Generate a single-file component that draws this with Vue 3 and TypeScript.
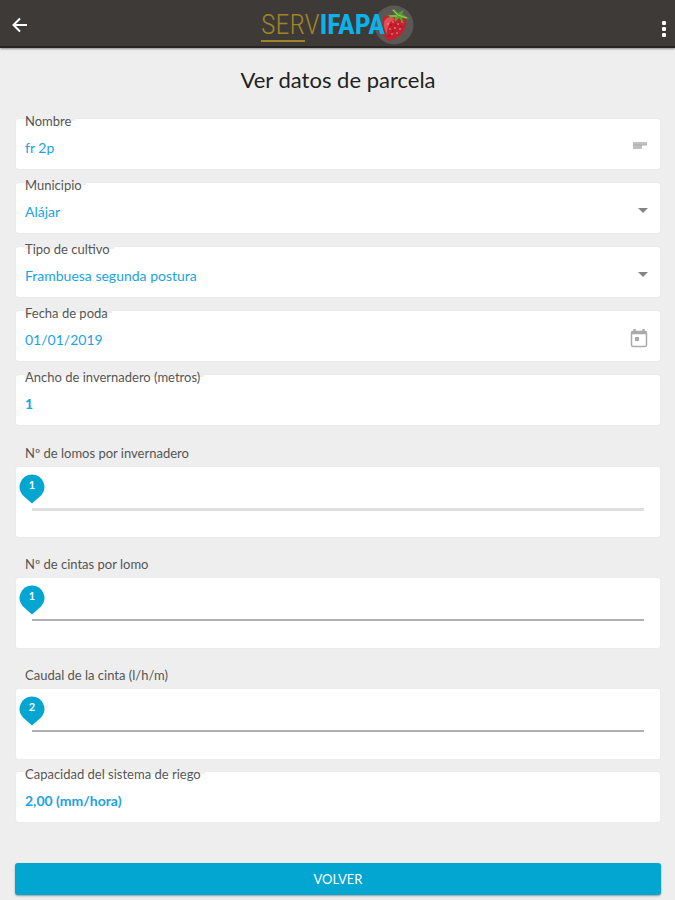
<script setup lang="ts">
import { ref } from 'vue'

interface Slider {
  id: string
  label: string
  min: number
  max: number
  value: number
  soft: boolean
}

const nombre = ref('fr 2p')
const municipio = ref('Alájar')
const cultivo = ref('Frambuesa segunda postura')
const fecha = ref('01/01/2019')
const ancho = ref('1')
const capacidad = ref('2,00 (mm/hora)')

const sliders = ref<Slider[]>([
  { id: 'lomos', label: 'Nº de lomos por invernadero', min: 1, max: 20, value: 1, soft: true },
  { id: 'cintas', label: 'Nº de cintas por lomo', min: 1, max: 10, value: 1, soft: false },
  { id: 'caudal', label: 'Caudal de la cinta (l/h/m)', min: 2, max: 10, value: 2, soft: false },
])

const percent = (s: Slider): string => `${((s.value - s.min) / (s.max - s.min)) * 100}%`
</script>

<template>
  <div class="page">
    <header class="bar">
      <button class="bar-button" type="button" aria-label="Atrás">
        <svg width="16" height="16" viewBox="0 0 16 16" fill="none" stroke="#fff" stroke-width="2">
          <path d="M15 8H2M8 1.5L1.500 8L8 14.500" />
        </svg>
      </button>
      <div class="logo">
        <span class="logo-serv">SERV</span><span class="logo-ifapa">IFAPA</span>
        <svg class="berry" width="40" height="40" viewBox="0 0 40 40" aria-hidden="true">
          <circle cx="20" cy="20" r="19.500" fill="#5a5755" />
          <g transform="translate(6 0)">
            <path d="M3 13C7 9 13 9 18 11C24 9 27 13 26 19C25 27 18 34 9 36C4 34 1 20 3 13Z" fill="#c4202f" />
            <path d="M5 15C8 11 13 12 15 15C11 15 7 20 7 29C4 24 3 18 5 15Z" fill="#e64b59" />
            <g fill="#f4a08f">
              <circle cx="8" cy="19" r="0.8" /><circle cx="13" cy="17" r="0.8" /><circle cx="18" cy="19" r="0.8" />
              <circle cx="22" cy="17" r="0.8" /><circle cx="10" cy="24" r="0.8" /><circle cx="15" cy="23" r="0.8" />
              <circle cx="20" cy="24" r="0.8" /><circle cx="12" cy="29" r="0.8" /><circle cx="17" cy="28" r="0.8" />
            </g>
            <g fill="#8b1329">
              <circle cx="11" cy="20" r="0.8" /><circle cx="16" cy="20" r="0.8" /><circle cx="21" cy="21" r="0.8" />
              <circle cx="13" cy="26" r="0.8" /><circle cx="9" cy="31" r="0.8" />
            </g>
            <path d="M16 10L12 5L14 4L18 8L24 5L22 9L30 14L22 13L24 19L19 13L15 17L15 12L8 14L11 11L6 10Z" fill="#55a52c" />
            <path d="M13 5L18 10L27 13M17 11L9 11" fill="none" stroke="#96cf57" />
          </g>
        </svg>
      </div>
      <button class="bar-button menu" type="button" aria-label="Más opciones">
        <svg width="6" height="18" viewBox="0 0 6 18" fill="#fff">
          <rect x="1" y="1" width="4" height="4" rx="1" />
          <rect x="1" y="7" width="4" height="4" rx="1" />
          <rect x="1" y="13" width="4" height="4" rx="1" />
        </svg>
      </button>
    </header>

    <main class="content">
      <h1>Ver datos de parcela</h1>
      <form class="form" @submit.prevent>
        <div class="field">
          <label for="nombre">Nombre</label>
          <div class="line">
            <input id="nombre" v-model="nombre" type="text" />
            <svg class="icon" width="16" height="8" viewBox="0 0 16 8" fill="#c0c0c0" aria-hidden="true">
              <path d="M1 0H15V3H10V7H1Z" />
              <path d="M1 3H15" stroke="#aaa" />
            </svg>
          </div>
        </div>
        <div class="field">
          <label for="municipio">Municipio</label>
          <div class="line">
            <select id="municipio" v-model="municipio"><option>Alájar</option></select>
            <svg class="icon" width="10" height="5" viewBox="0 0 10 5" fill="#858585" aria-hidden="true"><path d="M0 0H10L5 5Z" /></svg>
          </div>
        </div>
        <div class="field">
          <label for="cultivo">Tipo de cultivo</label>
          <div class="line">
            <select id="cultivo" v-model="cultivo"><option>Frambuesa segunda postura</option></select>
            <svg class="icon" width="10" height="5" viewBox="0 0 10 5" fill="#858585" aria-hidden="true"><path d="M0 0H10L5 5Z" /></svg>
          </div>
        </div>
        <div class="field">
          <label for="fecha">Fecha de poda</label>
          <div class="line">
            <input id="fecha" v-model="fecha" type="text" />
            <svg class="icon" width="18" height="20" viewBox="0 0 18 20" fill="none" stroke="#aaa" aria-hidden="true">
              <rect x="1.500" y="3.500" width="15" height="15" rx="1.500" stroke-width="1.500" />
              <path d="M1 5H17M4.500 1V5M13.500 1V5" stroke-width="2.500" />
              <rect x="5" y="9" width="4" height="4" fill="#aaa" stroke="none" />
            </svg>
          </div>
        </div>
        <div class="field">
          <label for="ancho">Ancho de invernadero (metros)</label>
          <div class="line"><input id="ancho" v-model="ancho" class="strong" type="text" /></div>
        </div>

        <div v-for="s in sliders" :key="s.id" class="slider">
          <label :for="s.id">{{ s.label }}</label>
          <div class="slider-card">
            <div class="pin-row">
              <output class="pin" :for="s.id" :style="{ marginLeft: percent(s) }">
                <svg width="26" height="30" viewBox="0 0 26 30" fill="#03a5d1" aria-hidden="true">
                  <path d="M13 0.500A12.500 12.500 0 0 1 22 21.500L13 29.500L4 21.500A12.500 12.500 0 0 1 13 0.500Z" />
                </svg>
                <span>{{ s.value }}</span>
              </output>
            </div>
            <input :id="s.id" v-model.number="s.value" type="range" :min="s.min" :max="s.max" :class="{ soft: s.soft }" />
          </div>
        </div>

        <div class="field">
          <label for="capacidad">Capacidad del sistema de riego</label>
          <div class="line"><input id="capacidad" v-model="capacidad" class="strong" type="text" readonly /></div>
        </div>
        <button class="back" type="button">VOLVER</button>
      </form>
    </main>
  </div>
</template>

<style>
body {
  background: #eee;
}
</style>

<style scoped>
.page {
  font-family: Lato, "Open Sans", sans-serif;
  color: #555;
  background: #eee;
}
.bar {
  display: flex;
  align-items: center;
  justify-content: space-between;
  box-sizing: border-box;
  height: 48px;
  padding: 4px 8px 0;
  background: #3d3a38;
  border-bottom: 2px solid #282423;
  box-shadow: 0 1px 2px #888;
}
.bar-button {
  display: flex;
  width: 24px;
  padding: 4px;
  border: 0;
  background: none;
}
.menu {
  justify-content: flex-end;
  padding: 8px 0 0;
}
.logo {
  display: flex;
  align-items: center;
  font: 28px/34px "Roboto Condensed", "Open Sans Condensed", "Liberation Sans Narrow", "DejaVu Sans Condensed", sans-serif;
}
.logo-serv {
  background: linear-gradient(#a18427, #a18427) left bottom / 44px 2px no-repeat;
  color: #a18427;
  font-weight: 300;
}
.logo-ifapa {
  position: relative;
  z-index: 1;
  color: #0bb3e8;
  font-weight: 700;
}
.berry {
  margin: 0 0 0 -11px;
}
.content {
  padding: 16px 15px 5px 16px;
}
h1 {
  margin: 0 0 23px;
  color: #222;
  font-size: 22px;
  font-weight: 400;
  line-height: 32px;
  text-align: center;
}
.form {
  display: flex;
  flex-direction: column;
}
.field {
  box-sizing: border-box;
  height: 50px;
  margin-bottom: 14px;
  padding: 0 9px;
  background: #fff;
  border-radius: 2px;
  box-shadow: 0 0 1px #d8d8d8;
}
label {
  font-size: 13px;
  line-height: 16px;
}
.field label {
  display: block;
  width: fit-content;
  margin-top: -6px;
  padding-right: 4px;
  background: linear-gradient(#eee 8px, transparent 8px);
}
.line {
  display: flex;
  align-items: center;
  height: 38px;
}
.line input,
.line select {
  flex: 1;
  min-width: 0;
  height: 24px;
  margin: 0;
  padding: 0;
  border: 0;
  outline: 0;
  appearance: none;
  background: none;
  color: #1ba3e1;
  font: 14px/24px Lato, "Open Sans", sans-serif;
}
.line input.strong {
  font-weight: 700;
}
.icon {
  margin: 0 3px 4px 0;
}
.slider {
  margin-bottom: 13px;
}
.slider label {
  display: block;
  padding: 6px 9px;
}
.slider-card {
  box-sizing: border-box;
  height: 70px;
  padding: 7px 16px 0;
  background: #fff;
  border-radius: 2px;
  box-shadow: 0 0 1px #d8d8d8;
}
.pin-row {
  display: flex;
  height: 29px;
}
.pin {
  position: relative;
  width: 0;
}
.pin svg {
  position: absolute;
  top: 0;
  left: -13px;
}
.pin span {
  position: absolute;
  top: 3px;
  left: -13px;
  width: 26px;
  color: #fff;
  font-size: 11px;
  font-weight: 700;
  line-height: 16px;
  text-align: center;
}
.slider input {
  display: block;
  width: 100%;
  height: 12px;
  margin: 0;
  appearance: none;
  background: linear-gradient(#b0b0b0, #b0b0b0) center / 100% 2px no-repeat;
}
.slider input.soft {
  background: linear-gradient(#dedede, #dedede) center / 100% 3px no-repeat;
}
.slider input::-webkit-slider-thumb {
  appearance: none;
  width: 1px;
  height: 12px;
}
.back {
  height: 32px;
  margin: 27px -1px 0;
  padding: 0;
  border: 0;
  border-radius: 3px;
  background: #03a5d1;
  box-shadow: 0 1px 2px #999;
  color: #fff;
  font: 13px/30px Lato, "Open Sans", sans-serif;
}
</style>
